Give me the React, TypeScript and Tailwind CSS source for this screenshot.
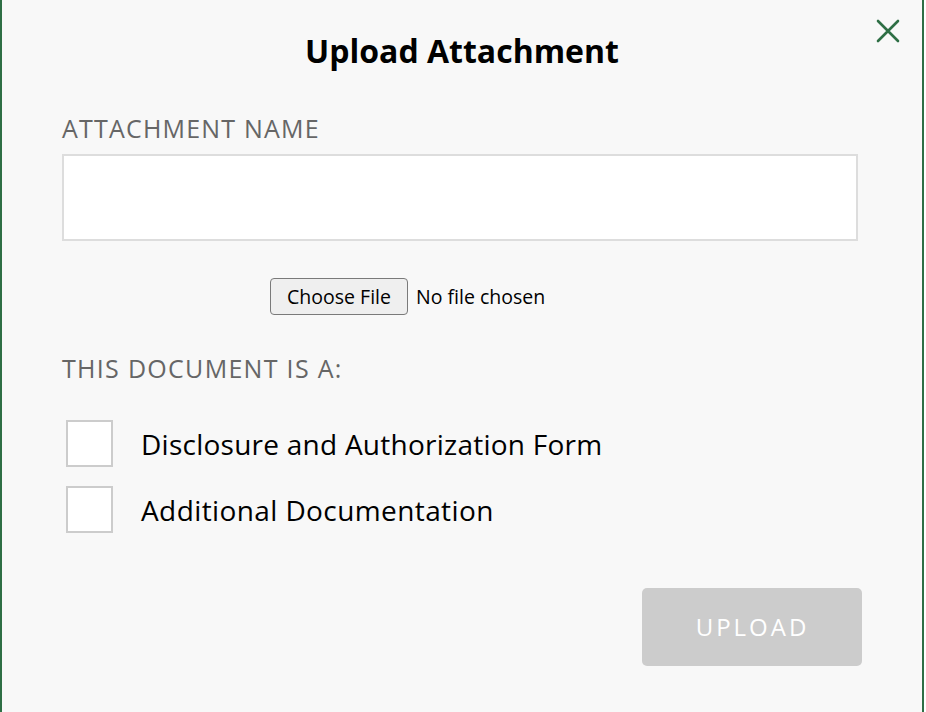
import React from "react";

export default function App() {
  const font = { fontFamily: '"Open Sans", "Noto Sans", sans-serif' };
  return (
    <div className="w-[926px] h-[712px] bg-white overflow-hidden" style={font}>
      <div className="relative w-[924px] h-[712px] bg-[#f8f8f8] border-l-[2px] border-r-[2px] border-[#2e6f45] px-[60px]">
        <button className="absolute left-[874px] top-[19px] w-[24px] h-[24px]" aria-label="close">
          <svg width="24" height="24" viewBox="0 0 24 24">
            <path d="M2 2 L22 22 M22 2 L2 22" stroke="#2e6f45" strokeWidth="2.6" strokeLinecap="round" fill="none" />
          </svg>
        </button>
        <h1 className="pt-[31px] text-center text-[32px] leading-[40px] font-bold text-black">
          Upload Attachment
        </h1>
        <div className="mt-[41px] text-[25px] leading-[32px] text-[#666666] tracking-[1.2px]">ATTACHMENT NAME</div>
        <div className="mt-[10px] w-[796px] h-[87px] bg-white border-[2px] border-[#dddddd]" />
        <div className="mt-[37px] flex items-center h-[37px] pl-[208px]">
          <div className="h-[37px] w-[138px] flex items-center justify-center rounded-[4px] border border-[#7a7a7a] bg-[#efefef] text-[19.5px] text-black">
            Choose File
          </div>
          <span className="ml-[8px] text-[19.5px] text-black">No file chosen</span>
        </div>
        <div className="mt-[37px] text-[25px] leading-[32px] text-[#666666] tracking-[1.3px]">THIS DOCUMENT IS A:</div>
        <div className="mt-[36px] flex flex-col gap-[19px] pl-[4px]">
          <label className="flex items-center h-[47px]">
            <span className="w-[47px] h-[47px] bg-white border-[2px] border-[#cccccc]" />
            <span className="ml-[28px] text-[28px] text-black tracking-[0.25px]">Disclosure and Authorization Form</span>
          </label>
          <label className="flex items-center h-[47px]">
            <span className="w-[47px] h-[47px] bg-white border-[2px] border-[#cccccc]" />
            <span className="ml-[28px] text-[28px] text-black tracking-[0.4px]">Additional Documentation</span>
          </label>
        </div>
        <div className="mt-[55px] flex justify-end">
          <div className="w-[220px] h-[78px] rounded-[5px] bg-[#cccccc] flex items-center justify-center text-[24px] text-white tracking-[3px] pl-[1px]">
            UPLOAD
          </div>
        </div>
      </div>
    </div>
  );
}
